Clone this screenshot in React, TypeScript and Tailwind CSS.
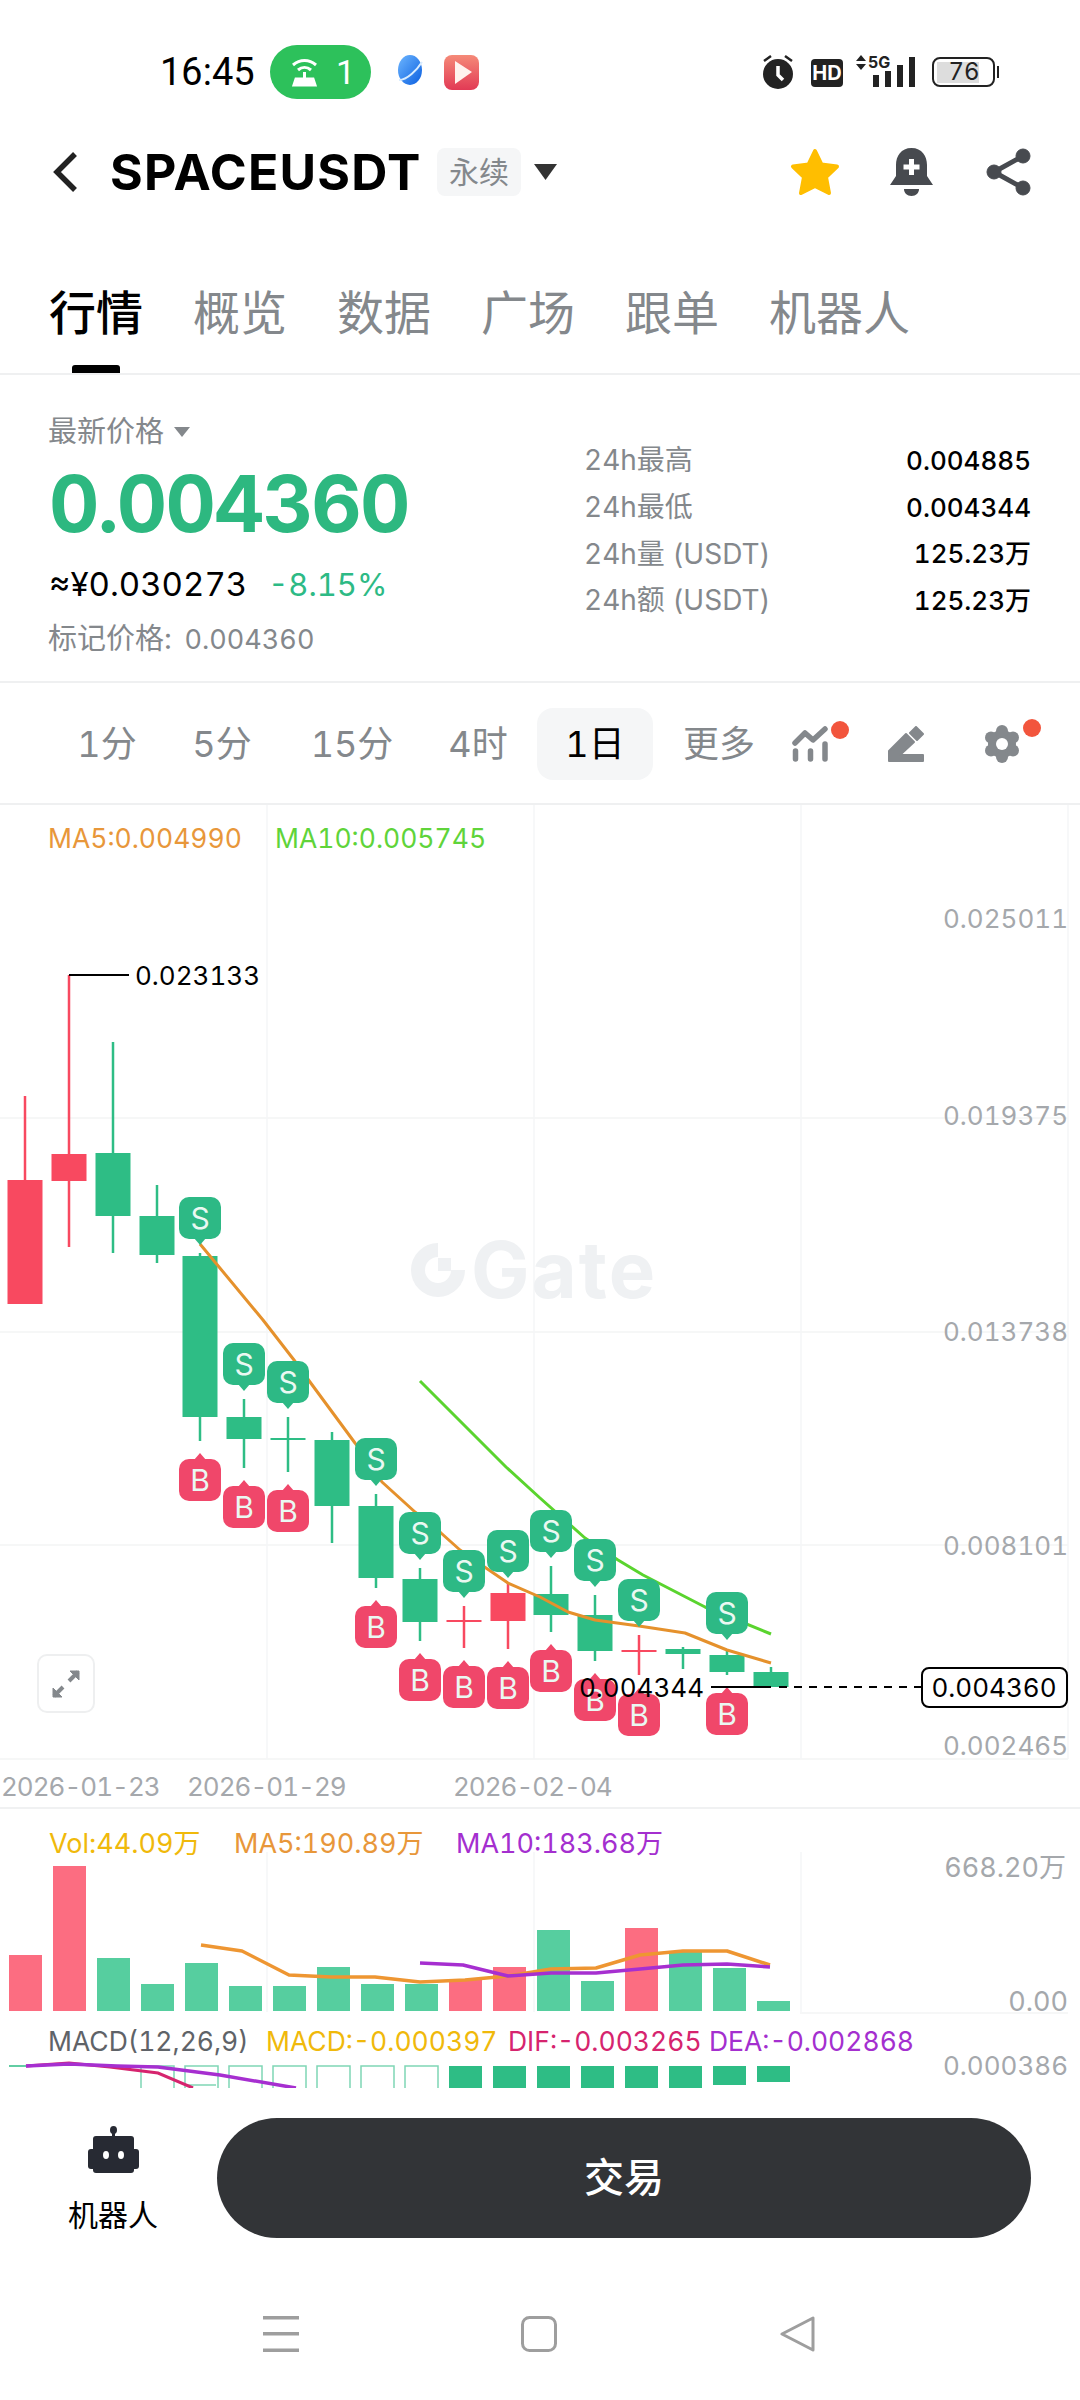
type Candle = [number, number, number, number, number, 'r' | 'g'];

const RED = '#F84960';
const GREEN = '#2EBD85';

// x, wick top, body top, body bottom, wick bottom, colour
const candles: Candle[] = [
  [25, 1096, 1180, 1304, 1304, 'r'],
  [69, 975, 1154, 1181, 1247, 'r'],
  [113, 1042, 1153, 1216, 1253, 'g'],
  [157, 1185, 1216, 1255, 1263, 'g'],
  [200, 1253, 1256, 1417, 1441, 'g'],
  [244, 1399, 1417, 1439, 1468, 'g'],
  [288, 1417, 1438, 1440, 1472, 'g'],
  [332, 1432, 1440, 1506, 1543, 'g'],
  [376, 1494, 1506, 1578, 1588, 'g'],
  [420, 1568, 1579, 1622, 1641, 'g'],
  [464, 1606, 1620, 1622, 1648, 'r'],
  [508, 1583, 1593, 1621, 1649, 'r'],
  [551, 1566, 1594, 1615, 1632, 'g'],
  [595, 1595, 1615, 1651, 1661, 'g'],
  [639, 1635, 1650, 1652, 1675, 'r'],
  [683, 1647, 1649, 1654, 1669, 'g'],
  [727, 1650, 1655, 1672, 1675, 'g'],
  [771, 1667, 1672, 1687, 1687, 'g'],
];

const sellMarks = [
  [200, 1197], [244, 1343], [288, 1361], [376, 1438], [420, 1512], [464, 1550],
  [508, 1530], [551, 1510], [595, 1539], [639, 1579], [727, 1592],
];
const buyMarks = [
  [200, 1459], [244, 1486], [288, 1490], [376, 1606], [420, 1659], [464, 1666],
  [508, 1667], [551, 1650], [595, 1679], [639, 1694], [727, 1693],
];

const ma5 = '200,1244 263,1320 294,1360 310,1382 355,1443 382,1482 415,1512 441,1533 460,1550 486,1568 508,1583 540,1597 568,1612 595,1620 639,1626 685,1633 727,1650 771,1663';
const ma10 = '420,1381 506,1467 540,1498 585,1538 618,1560 643,1575 705,1607 771,1634';

// bar tops in the volume panel, page px
const volBars: [number, 'r' | 'g'][] = [
  [1955, 'r'], [1866, 'r'], [1958, 'g'], [1984, 'g'], [1963, 'g'], [1986, 'g'],
  [1986, 'g'], [1967, 'g'], [1984, 'g'], [1984, 'g'], [1980, 'r'], [1967, 'r'],
  [1930, 'g'], [1981, 'g'], [1928, 'r'], [1951, 'g'], [1968, 'g'], [2001, 'g'],
];
const volMa5 = '201,1945 242,1951 289,1975 331,1977 375,1977 420,1982 465,1980 508,1976 551,1969 596,1968 640,1955 683,1951 727,1951 770,1965';
const volMa10 = '420,1963 463,1965 508,1976 551,1973 596,1973 640,1969 683,1965 727,1964 770,1967';

const intervals = [
  { label: '1分', cls: 'ml-[57px] w-[100px] text-[#84888C]' },
  { label: '5分', cls: 'ml-[15px] w-[100px] text-[#84888C]' },
  { label: '15分', cls: 'ml-[30px] w-[100px] text-[#84888C]' },
  { label: '4时', cls: 'ml-[26px] w-[100px] text-[#84888C]' },
  { label: '1日', cls: 'ml-[9px] w-[116px] rounded-2xl bg-[#F5F6F7] text-black' },
  { label: '更多', cls: 'ml-[16px] w-[100px] text-[#84888C]' },
];

const stats = [
  ['24h最高', '0.004885'],
  ['24h最低', '0.004344'],
  ['24h量 (USDT)', '125.23万'],
  ['24h额 (USDT)', '125.23万'],
];

function Mark({ x, y, kind }: { x: number; y: number; kind: 'S' | 'B' }) {
  const isSell = kind === 'S';
  return (
    <g>
      <rect x={x - 21} y={y} width={42} height={42} rx={10} fill={isSell ? '#2DB985' : '#F0476A'} />
      <path
        d={isSell ? `M${x - 6} ${y + 41}L${x} ${y + 48}L${x + 6} ${y + 41}Z` : `M${x - 6} ${y + 1}L${x} ${y - 6}L${x + 6} ${y + 1}Z`}
        fill={isSell ? '#2DB985' : '#F0476A'}
      />
      <text x={x} y={y + 32} textAnchor="middle" fontSize={30} fill="#EAF8F2">
        {kind}
      </text>
    </g>
  );
}

function KlineChart() {
  return (
    <svg className="absolute left-0 top-0" width={1080} height={1004} viewBox="0 805 1080 1004">
      {[1118, 1332, 1545, 1759].map((y) => (
        <line key={y} x1={0} x2={1068} y1={y} y2={y} stroke="#F3F4F5" strokeWidth={1.5} />
      ))}
      {[267, 534, 801, 1068].map((x) => (
        <line key={x} x1={x} x2={x} y1={805} y2={1759} stroke="#F5F6F7" strokeWidth={1.5} />
      ))}

      {/* watermark */}
      <path d="M438 1250A20 20 0 1 0 458 1270" fill="none" stroke="#EFF1F3" strokeWidth={14} />
      <rect x={438} y={1258} width={13} height={13} fill="#EFF1F3" />
      <text x={471} y={1298} fontSize={78} fontWeight={700} letterSpacing={2} fill="#EFF1F3">
        Gate
      </text>

      {candles.map(([x, top, bodyTop, bodyBottom, bottom, color]) => {
        const fill = color === 'r' ? RED : GREEN;
        return (
          <g key={x}>
            <line x1={x} x2={x} y1={top} y2={bottom} stroke={fill} strokeWidth={2.5} />
            <rect x={x - 17.5} y={bodyTop} width={35} height={bodyBottom - bodyTop} fill={fill} />
          </g>
        );
      })}

      <polyline points={ma5} fill="none" stroke="#E5912C" strokeWidth={3} strokeLinejoin="round" />
      <polyline points={ma10} fill="none" stroke="#5AD42E" strokeWidth={3} strokeLinejoin="round" />

      {sellMarks.map(([x, y]) => (
        <Mark key={x} x={x} y={y} kind="S" />
      ))}
      {buyMarks.map(([x, y]) => (
        <Mark key={x} x={x} y={y} kind="B" />
      ))}

      {/* high / low / last price */}
      <path d="M69 975H129" stroke="#000" strokeWidth={2} />
      <text x={135} y={985} fontSize={26} fill="#000">0.023133</text>
      <text x={579} y={1697} fontSize={26} fill="#000">0.004344</text>
      <path d="M711 1687H771" stroke="#000" strokeWidth={2} />
      <line x1={779} x2={921} y1={1687} y2={1687} stroke="#000" strokeWidth={2} strokeDasharray="8 7" />

      {[
        ['0.025011', 928],
        ['0.019375', 1125],
        ['0.013738', 1341],
        ['0.008101', 1555],
        ['0.002465', 1755],
      ].map(([label, y]) => (
        <text key={label} x={1068} y={y} textAnchor="end" fontSize={26} fill="#A5A8AC">
          {label}
        </text>
      ))}
      <rect x={922} y={1668} width={145} height={39} rx={7} fill="#fff" stroke="#000" strokeWidth={2} />
      <text x={994} y={1697} textAnchor="middle" fontSize={26} fill="#000">0.004360</text>

      {[['2026-01-23', 1], ['2026-01-29', 187], ['2026-02-04', 453]].map(([label, x]) => (
        <text key={label} x={x} y={1796} fontSize={26} letterSpacing={-1} fill="#A5A8AC">
          {label}
        </text>
      ))}
    </svg>
  );
}

function VolumeMacd() {
  return (
    <svg className="absolute left-0 top-0" width={1080} height={279} viewBox="0 1809 1080 279">
      {[267, 534, 801].map((x) => (
        <line key={x} x1={x} x2={x} y1={1852} y2={2012} stroke="#F5F6F7" strokeWidth={1.5} />
      ))}
      <line x1={800} x2={1068} y1={2013} y2={2013} stroke="#F3F4F5" strokeWidth={1.5} />
      {volBars.map(([top, color], i) => (
        <rect
          key={i}
          x={9 + i * 44}
          y={top}
          width={33}
          height={2011 - top}
          fill={color === 'r' ? '#FC6D81' : '#56CE9F'}
        />
      ))}
      <polyline points={volMa5} fill="none" stroke="#EE9632" strokeWidth={3.5} strokeLinejoin="round" />
      <polyline points={volMa10} fill="none" stroke="#A62FD0" strokeWidth={3.5} strokeLinejoin="round" />

      {/* macd */}
      <path d="M9 2066H28" stroke={GREEN} strokeWidth={1.5} />
      {[3, 4, 5, 6, 7, 8, 9].map((i) => (
        <path
          key={i}
          d={`M${9 + i * 44} 2088V2066H${42 + i * 44}V2088`}
          fill="none"
          stroke="#7FD6B5"
          strokeWidth={1.5}
        />
      ))}
      <path d="M185 2085H216" stroke="#7FD6B5" strokeWidth={1.5} />
      {[10, 11, 12, 13, 14, 15, 16, 17].map((i) => (
        <rect
          key={i}
          x={9 + i * 44}
          y={2066}
          width={33}
          height={i === 16 ? 19 : i === 17 ? 16 : 22}
          fill={GREEN}
        />
      ))}
      <polyline points="26,2066 69,2063 110,2067 158,2073 193,2088" fill="none" stroke="#D6246E" strokeWidth={3} />
      <polyline points="26,2066 69,2064 117,2066 158,2067 220,2075 296,2088" fill="none" stroke="#A62FD0" strokeWidth={3.5} />

      <text x={1066} y={1877} textAnchor="end" fontSize={27} fill="#A5A8AC">668.20万</text>
      <text x={1068} y={2011} textAnchor="end" fontSize={27} fill="#A5A8AC">0.00</text>
      <text x={1068} y={2075} textAnchor="end" fontSize={26} fill="#A5A8AC">0.000386</text>
    </svg>
  );
}

function StatusBar() {
  return (
    <div className="flex h-[120px] items-start pl-[160px] pr-[85px] pt-[45px]">
      <span className="w-[93px] font-['Roboto',sans-serif] text-[38px] leading-[54px] text-black">16:45</span>
      <div className="ml-[17px] flex h-[54px] w-[101px] items-center rounded-[27px] bg-[#2DC15B] pl-[19px]">
        <svg width="31" height="30" viewBox="0 0 31 30" fill="none" stroke="#fff" strokeWidth="3">
          <path d="M4 8C11 2 20 2 27 8" />
          <path d="M9 13C13 9.500 18 9.500 22 13" />
          <path d="M15.500 15V22" />
          <path d="M5 28L7 22H24L26 28Z" fill="#fff" />
        </svg>
        <span className="ml-[16px] font-['Roboto',sans-serif] text-[34px] text-white">1</span>
      </div>
      <svg className="ml-[26px] mt-[9px]" width="26" height="36" viewBox="0 0 26 36">
        <defs>
          <linearGradient id="blueBall" x1="0" y1="0" x2="1" y2="1">
            <stop offset="0" stopColor="#6DB6FF" />
            <stop offset="1" stopColor="#0B5FE0" />
          </linearGradient>
        </defs>
        <ellipse cx="13" cy="16" rx="12" ry="15" fill="url(#blueBall)" />
        <path d="M2 26C10 26 20 16 25 8" stroke="#D8ECFF" strokeWidth="2" fill="none" />
      </svg>
      <svg className="ml-[21px] mt-[10px]" width="35" height="35" viewBox="0 0 35 35">
        <defs>
          <linearGradient id="redApp" x1="0" y1="0" x2="0" y2="1">
            <stop offset="0" stopColor="#F58A78" />
            <stop offset="1" stopColor="#E23A55" />
          </linearGradient>
        </defs>
        <rect width="35" height="35" rx="8" fill="url(#redApp)" />
        <path d="M11 6L28 17L11 29Z" fill="#FFF3EE" />
      </svg>

      <div className="ml-auto flex items-start">
        <svg className="mt-[9px]" width="32" height="36" viewBox="0 0 32 36">
          <circle cx="16" cy="20" r="15" fill="#222" />
          <path d="M16 12V21L21 26" stroke="#fff" strokeWidth="3.500" fill="none" />
          <path d="M2 7L9 2M30 7L23 2" stroke="#222" strokeWidth="2.500" />
        </svg>
        <div className="ml-[17px] mt-[14px] flex h-[28px] w-[32px] items-center justify-center rounded-[4px] bg-[#222] text-[20px] font-bold leading-none text-white">
          HD
        </div>
        <div className="relative ml-[12px] mt-[10px] h-[32px] w-[60px]">
          <svg className="absolute left-0 top-0" width="60" height="32" viewBox="0 0 60 32" fill="#222">
            <path d="M1 6L6 0L11 6ZM1 9L6 15L11 9Z" />
            <rect x="18" y="20" width="6" height="12" />
            <rect x="30" y="16" width="6" height="16" />
            <rect x="42" y="10" width="6" height="22" />
            <rect x="54" y="2" width="6" height="30" />
          </svg>
          <span className="absolute left-[13px] top-[-1px] text-[16px] font-bold leading-[16px] text-[#222]">5G</span>
        </div>
        <div className="relative ml-[17px] mt-[12px] flex h-[30px] w-[63px] items-center rounded-[8px] border-2 border-[#222] pl-[3px]">
          <div className="flex h-[21px] w-[42px] items-center justify-center bg-[#DDDDDD] text-[24px] leading-none text-[#222]">
            <span className="ml-[12px]">76</span>
          </div>
          <div className="absolute right-[-6px] top-[7px] h-[12px] w-[2px] bg-[#222]" />
        </div>
      </div>
    </div>
  );
}

function Header() {
  return (
    <div className="flex h-[104px] items-center pl-[50px] pr-[49px]">
      <svg width="30" height="42" viewBox="0 0 30 42" fill="none" stroke="#222" strokeWidth="5.500">
        <path d="M25 3L7 21L25 39" />
      </svg>
      <span className="ml-[30px] w-[307px] whitespace-nowrap text-[50px] font-bold leading-none tracking-[1.2px] text-black">SPACEUSDT</span>
      <span className="ml-[20px] flex h-[48px] w-[84px] items-center justify-center rounded-lg bg-[#F5F6F7] text-[30px] text-[#84888C]">
        永续
      </span>
      <svg className="ml-[13px]" width="23" height="16" viewBox="0 0 23 16" fill="#333">
        <path d="M0 0H23L11.500 16Z" />
      </svg>
      <svg className="ml-auto" width="50" height="48" viewBox="0 0 50 48" fill="#FFBE00" stroke="#FFBE00" strokeWidth="4" strokeLinejoin="round">
        <path d="M25 3L31.500 16.500L47 18.500L36 29L39 45L25 38L11 45L14 29L3 18.500L18.500 16.500Z" />
      </svg>
      <svg className="ml-[50px]" width="43" height="48" viewBox="0 0 43 48">
        <path d="M21.500 0C32 0 37 8 37 17V28L43 37H0L6 28V17C6 8 11 0 21.500 0Z" fill="#474A4F" />
        <path d="M14 41H29C29 45 26 48 21.500 48C17 48 14 45 14 41Z" fill="#474A4F" />
        <path d="M21.500 11V27M13.500 19H29.500" stroke="#fff" strokeWidth="5" />
      </svg>
      <svg className="ml-[53px]" width="45" height="48" viewBox="0 0 45 48" fill="#474A4F" stroke="#474A4F">
        <path d="M37 8L8 24L37 40" fill="none" strokeWidth="5" />
        <circle cx="37" cy="8" r="7" />
        <circle cx="8" cy="24" r="7" />
        <circle cx="37" cy="40" r="7" />
      </svg>
    </div>
  );
}

function Tabs() {
  const items = ['行情', '概览', '数据', '广场', '跟单', '机器人'];
  return (
    <div className="flex h-[151px] gap-[50px] border-b-2 border-[#EFF0F1] pl-[49px] pt-[58px]">
      {items.map((t, i) => (
        <div
          key={t}
          className={`relative h-[62px] text-[47px] leading-[62px] ${i === 0 ? 'font-medium text-black' : 'text-[#84888C]'}`}
        >
          {t}
          {i === 0 && <div className="absolute left-[23px] top-[83px] h-[8px] w-[48px] rounded-t-[3px] bg-black" />}
        </div>
      ))}
    </div>
  );
}

function PriceBlock() {
  return (
    <div className="flex h-[308px] border-b-2 border-[#EFF0F1] pl-[48px] pr-[49px]">
      <div className="pt-[37px]">
        <div className="flex h-[40px] items-center text-[29px] text-[#84888C]">
          最新价格
          <svg className="ml-[10px]" width="16" height="10" viewBox="0 0 16 10" fill="#84888C">
            <path d="M0 0H16L8 10Z" />
          </svg>
        </div>
        <div className="mt-[12px] pl-[1px] text-[78px] font-bold leading-[80px] tracking-[-1.800px] text-[#2DB880]">0.004360</div>
        <div className="mt-[19px] flex h-[44px] items-center pl-[1px]">
          <span className="text-[33px] text-black">≈¥0.030273</span>
          <span className="ml-[21px] text-[31px] text-[#2DBA85]">-8.15%</span>
        </div>
        <div className="mt-[12px] text-[29px] leading-[40px] text-[#84888C]">
          标记价格: <span className="ml-[5px] text-[27px]">0.004360</span>
        </div>
      </div>
      <div className="ml-auto w-[447px] pt-[62px]">
        {stats.map(([label, value]) => (
          <div key={label} className="flex h-[46.700px] items-center justify-between">
            <span className="text-[28px] text-[#84888C]">{label}</span>
            <span className="text-[26px] font-medium text-black">{value}</span>
          </div>
        ))}
      </div>
    </div>
  );
}

function IntervalBar() {
  return (
    <div className="flex h-[122px] items-center border-b-2 border-[#EFF0F1] pt-[1px]">
      {intervals.map((it) => (
        <div key={it.label} className={`flex h-[72px] items-center justify-center text-[36px] ${it.cls}`}>
          {it.label}
        </div>
      ))}
      <div className="relative ml-[23px]">
        <svg className="block" width="36" height="36" viewBox="0 0 36 36" fill="none" stroke="#84888C" strokeWidth="5.500" strokeLinecap="round" strokeLinejoin="round">
          <path d="M3 17L13 7L21 14L33 3" />
          <path d="M3.500 25V33M18.500 25V33M33 18V33" />
        </svg>
        <div className="absolute left-[39px] top-[-5px] h-[18px] w-[18px] rounded-full bg-[#F2553D]" />
      </div>
      <svg className="ml-[60px] block" width="36" height="36" viewBox="0 0 36 36" fill="#84888C" stroke="#84888C" strokeWidth="2" strokeLinejoin="round">
        <path d="M22 7L28 1L35 8L29 14Z" />
        <path d="M1 25L18 8L26 16L12 29H35V35H1Z" />
      </svg>
      <div className="relative ml-[60px]">
        <svg className="block" width="36" height="38" viewBox="0 0 36 38" fill="#84888C">
          <circle cx="18" cy="19" r="14" />
          {[
            [18, 6],
            [29, 12.500],
            [29, 25.500],
            [18, 32],
            [7, 25.500],
            [7, 12.500],
          ].map(([cx, cy]) => (
            <circle key={`${cx}-${cy}`} cx={cx} cy={cy} r="6" />
          ))}
          <circle cx="18" cy="19" r="6" fill="#fff" />
        </svg>
        <div className="absolute left-[39px] top-[-6px] h-[18px] w-[18px] rounded-full bg-[#F2553D]" />
      </div>
    </div>
  );
}

function Footer() {
  return (
    <div className="relative flex-1 bg-white">
      <div className="flex pl-[50px] pt-[30px]">
        <div className="flex w-[126px] flex-col items-center">
          <svg className="mt-[8px]" width="51" height="47" viewBox="0 0 51 47" fill="#272A33">
            <ellipse cx="25.500" cy="4" rx="3.500" ry="4" />
            <rect x="24" y="6" width="3" height="6" />
            <rect x="5" y="10" width="41" height="37" rx="3" />
            <rect x="0" y="23" width="51" height="20" rx="3" />
            <ellipse cx="18" cy="29" rx="3" ry="4" fill="#fff" />
            <ellipse cx="33" cy="29" rx="3" ry="4" fill="#fff" />
          </svg>
          <span className="mt-[22px] text-[30px] leading-[40px] text-black">机器人</span>
        </div>
        <div className="ml-[41px] flex h-[120px] w-[814px] items-center justify-center rounded-full bg-[#323437] text-[40px] font-medium text-white">
          交易
        </div>
      </div>
      <div className="mt-[78px] flex items-center">
        <svg className="ml-[263px]" width="36" height="36" viewBox="0 0 36 36" fill="#9E9E9E">
          <rect y="0" width="36" height="3.500" />
          <rect y="16" width="36" height="3.500" />
          <rect y="32.500" width="36" height="3.500" />
        </svg>
        <svg className="ml-[222px]" width="36" height="36" viewBox="0 0 36 36" fill="none" stroke="#9E9E9E" strokeWidth="3">
          <rect x="1.500" y="1.500" width="33" height="33" rx="7" />
        </svg>
        <svg className="ml-[223px]" width="36" height="36" viewBox="0 0 36 36" fill="none" stroke="#9E9E9E" strokeWidth="3" strokeLinejoin="round">
          <path d="M33 2V34L2 18Z" />
        </svg>
      </div>
    </div>
  );
}

export default function App() {
  return (
    <div className="flex h-[2400px] w-[1080px] flex-col overflow-hidden bg-white font-['Inter','Noto_Sans_CJK_SC',sans-serif] tabular-nums">
      <StatusBar />
      <Header />
      <Tabs />
      <PriceBlock />
      <IntervalBar />

      {/* main kline */}
      <div className="relative h-[1004px] border-b-2 border-[#F0F1F2]">
        <KlineChart />
        <div className="relative flex pl-[48px] pt-[13px] text-[26.500px] leading-[40px]">
          <span className="w-[227px] text-[#E8973A]">MA5:0.004990</span>
          <span className="text-[#5FD43A]">MA10:0.005745</span>
        </div>
        <div className="absolute left-[37px] top-[849px] flex h-[59px] w-[58px] items-center justify-center rounded-[10px] border-2 border-[#EEEFF0] bg-white">
          <svg width="30" height="30" viewBox="0 0 30 30" fill="#84888C" stroke="#84888C" strokeWidth="4">
            <path d="M18 12L27 3M3 27L12 18" />
            <path d="M19 2H28V11Z" strokeWidth="1" />
            <path d="M2 19V28H11Z" strokeWidth="1" />
          </svg>
        </div>
      </div>

      {/* volume + macd */}
      <div className="relative h-[279px] shrink-0 overflow-hidden">
        <VolumeMacd />
        <div className="relative flex pl-[49px] pt-[15px] text-[27px] leading-[40px]">
          <span className="w-[185px] text-[#F0B90B]">Vol:44.09万</span>
          <span className="w-[222px] text-[#E8973A]">MA5:190.89万</span>
          <span className="text-[#A42FCF]">MA10:183.68万</span>
        </div>
        <div className="relative mt-[157px] flex pl-[48px] text-[26.500px] leading-[40px]">
          <span className="w-[218px] text-[#5F6368]">MACD(12,26,9)</span>
          <span className="w-[242px] text-[#F0B90B]">MACD:-0.000397</span>
          <span className="w-[201px] text-[#D6246E]">DIF:-0.003265</span>
          <span className="text-[#A42FCF]">DEA:-0.002868</span>
        </div>
      </div>

      <Footer />
    </div>
  );
}
